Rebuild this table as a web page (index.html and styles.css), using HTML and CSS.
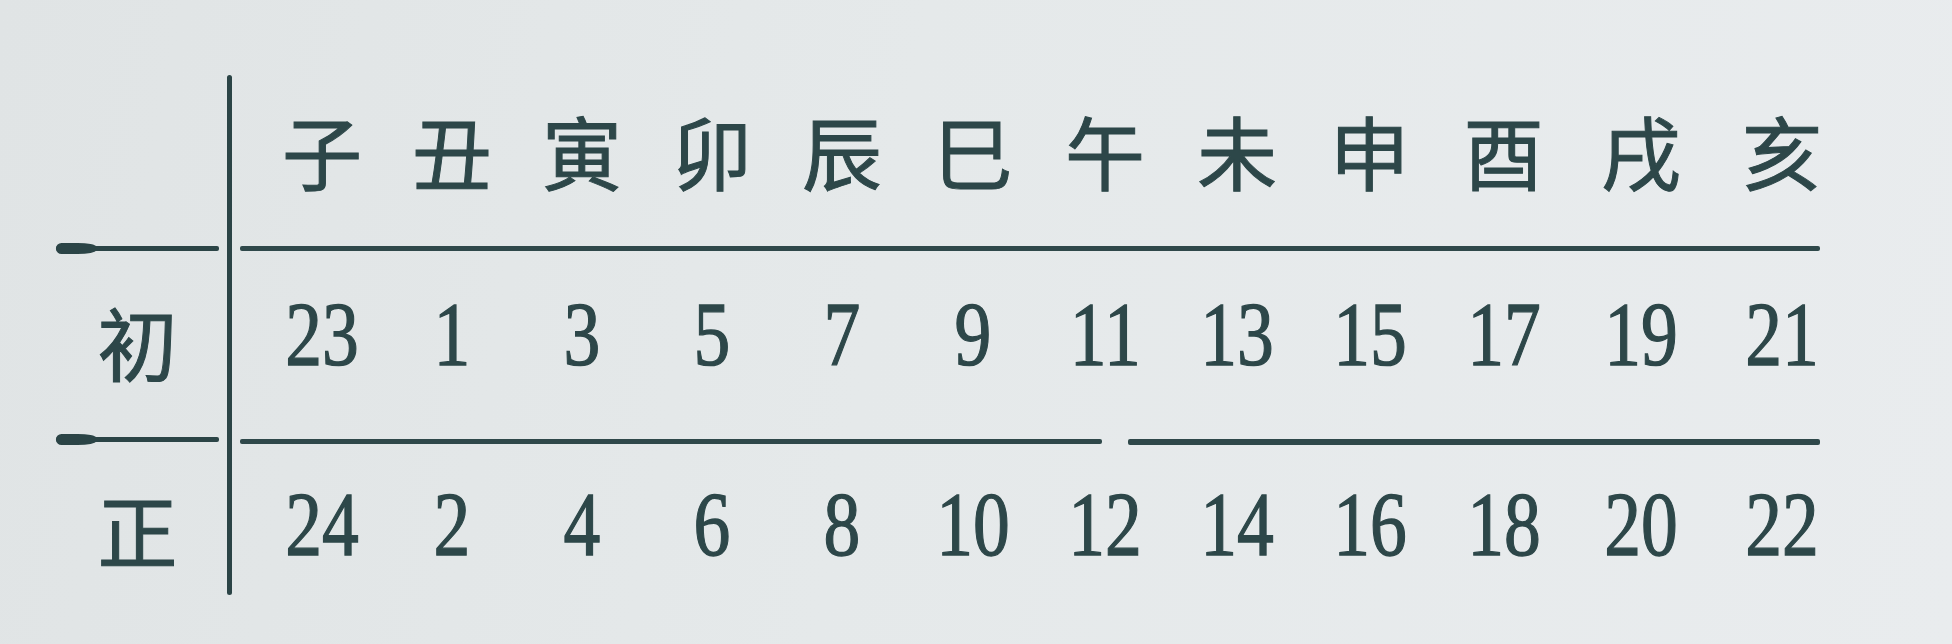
FILE: index.html
```html
<!DOCTYPE html>
<html lang="zh-Hant">
<head>
<meta charset="utf-8">
<title>時辰表</title>
<link rel="stylesheet" href="styles.css">
</head>
<body>
<div class="page">
  <div class="table">
    <div class="label head"></div>
    <div class="vrule"></div>
    <div class="body head">
      <div class="cols han">
        <span>子</span><span>丑</span><span>寅</span><span>卯</span><span>辰</span><span>巳</span><span>午</span><span>未</span><span>申</span><span>酉</span><span>戌</span><span>亥</span>
      </div>
    </div>

    <div class="label rule"><div class="lrule"></div></div>
    <div class="body rule"><div class="rrule"></div></div>

    <div class="label row1"><span class="han">初</span></div>
    <div class="body row1">
      <div class="cols num">
        <span><i>23</i></span><span><i>1</i></span><span><i>3</i></span><span><i>5</i></span><span><i>7</i></span><span><i>9</i></span><span><i>11</i></span><span><i>13</i></span><span><i>15</i></span><span><i>17</i></span><span><i>19</i></span><span><i>21</i></span>
      </div>
    </div>

    <div class="label rule2"><div class="lrule"></div></div>
    <div class="body rule2"><div class="rrule seg-a"></div><div class="rrule seg-b"></div></div>

    <div class="label row2"><span class="han">正</span></div>
    <div class="body row2">
      <div class="cols num">
        <span><i>24</i></span><span><i>2</i></span><span><i>4</i></span><span><i>6</i></span><span><i>8</i></span><span><i>10</i></span><span><i>12</i></span><span><i>14</i></span><span><i>16</i></span><span><i>18</i></span><span><i>20</i></span><span><i>22</i></span>
      </div>
    </div>
  </div>
</div>
</body>
</html>
```

FILE: styles.css
```css
html, body {
  margin: 0;
  padding: 0;
}
body {
  width: 1952px;
  height: 644px;
  overflow: hidden;
  background: linear-gradient(100deg, #e0e4e5 0%, #e5e9ea 45%, #e9ecee 100%);
  color: #2d4749;
}
.page {
  padding: 75px 0 0 56px;
}
.table {
  display: grid;
  grid-template-columns: 163px 21px 1580px;
  grid-template-rows: 170px 6px 185px 6px 153px;
}
.label { grid-column: 1; }
.body { grid-column: 3; }
.head { grid-row: 1; }
.rule { grid-row: 2; }
.row1 { grid-row: 3; }
.rule2 { grid-row: 4; }
.row2 { grid-row: 5; }

.vrule {
  grid-column: 2;
  grid-row: 1 / 6;
  width: 5px;
  margin-left: 8px;
  background: #2b4446;
  border-radius: 3px;
}

.han {
  font-family: "Noto Sans CJK TC", "Noto Sans CJK SC", sans-serif;
  font-size: 80px;
  line-height: 80px;
  font-weight: 400;
  -webkit-text-stroke: 1px #2d4749;
}
.cols {
  display: grid;
  grid-template-columns: 130px 130px 130px 130px 130px 132px 132px 132px 133px 135px 140px 142px;
  padding-left: 17px;
  text-align: center;
}
.body.head .cols { padding-top: 34px; }

.label.row1, .label.row2 {
  text-align: center;
}
.label.row1 { padding-top: 49px; }
.label.row2 { padding-top: 45px; }
.label .han { display: inline-block; }

.num {
  font-family: "Liberation Serif", "Times New Roman", serif;
  font-size: 92px;
  line-height: 92px;
  -webkit-text-stroke: 1.3px #2d4749;
}
.body.row1 .cols { padding-top: 37px; }
.body.row2 .cols { padding-top: 36px; }
.num i {
  font-style: normal;
  display: inline-block;
  transform: scaleX(0.8);
}

.rule, .rule2 {
  display: flex;
  align-items: center;
}
.lrule {
  position: relative;
  width: 163px;
  height: 5px;
  background: #2b4446;
  border-radius: 2px;
}
.lrule::before {
  content: "";
  position: absolute;
  left: 0;
  top: -3px;
  width: 40px;
  height: 11px;
  background: #2b4446;
  border-radius: 6px 20px 20px 6px / 6px 4px 4px 6px;
}
.rrule {
  height: 5px;
  background: #2f484a;
  border-radius: 2px;
}
.body.rule .rrule {
  width: 1580px;
}
.body.rule2 .seg-a {
  width: 862px;
  height: 5px;
  margin-top: 4px;
}
.body.rule2 .seg-b {
  width: 692px;
  height: 6px;
  margin-left: 26px;
  margin-top: 6px;
}
```
